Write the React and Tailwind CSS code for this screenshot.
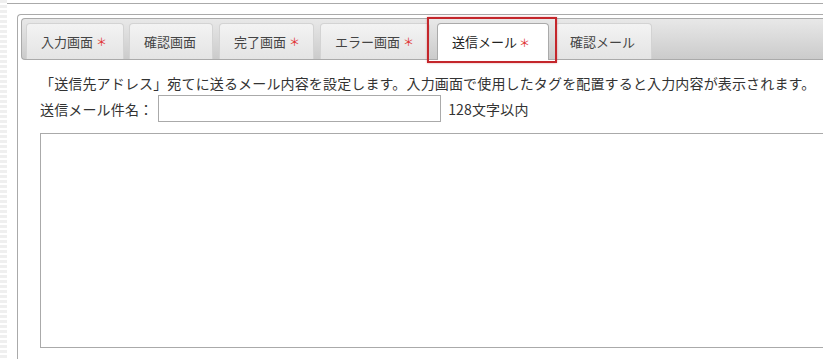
import React from 'react';

const tabs = [
  { label: '入力画面', required: true, cls: 'w-[98px]' },
  { label: '確認画面', required: false, cls: 'w-[84px] ml-[5px]' },
  { label: '完了画面', required: true, cls: 'w-[95px] ml-[6px]' },
  { label: 'エラー画面', required: true, cls: 'w-[110px] ml-[6px]' },
  { label: '送信メール', required: true, active: true, cls: 'w-[112px] ml-[7px]' },
  { label: '確認メール', required: false, cls: 'w-[97px] ml-[6px]' },
];

const Tab = ({ label, required, active, cls }) => {
  if (active) {
    return (
      <li className={`relative ${cls}`}>
        <div className="h-[37px] mb-[-1px] pl-[14px] flex items-center border border-b-0 border-[#aaaaaa] rounded-t-[4px] bg-white text-[13px] text-[#222]">
          {label}
          {required && <span className="ml-[2px] text-[11px] text-[#e03030]">＊</span>}
        </div>
        <div className="absolute left-[-10px] right-[-8px] top-[-6px] bottom-[-4px] border-2 border-[#c4262b] shadow-[0_0_2px_rgba(196,38,43,0.4)] pointer-events-none" />
      </li>
    );
  }
  return (
    <li className={`h-[36px] pl-[14px] flex items-center border border-b-0 border-[#d3d3d3] rounded-t-[4px] bg-[linear-gradient(#f3f3f3,#e4e4e4)] text-[13px] text-[#444] ${cls}`}>
      {label}
      {required && <span className="ml-[3px] text-[11px] text-[#e03030]">＊</span>}
    </li>
  );
};

export default function App() {
  return (
    <div className="flex h-[359px] w-full overflow-hidden bg-white font-['Noto_Sans_CJK_JP','Noto_Sans',sans-serif] text-[#333]">
      <div className="w-[7px] shrink-0 bg-[repeating-linear-gradient(180deg,#efefef_0px,#efefef_3px,#ffffff_3px,#ffffff_5px)]" />
      <div className="flex-1 pt-[3px] min-w-0">
        <div className="border-t border-[#aaaaaa] h-full pt-[10px] pl-[10px]">
          <div className="h-full border border-r-0 border-b-0 border-[#aaaaaa] rounded-tl-[4px] p-[3px] pr-0">
            <div className="h-[42px] border border-r-0 border-[#aaaaaa] rounded-l-[4px] bg-[linear-gradient(#e8e8e8,#cbcbcb)] pl-[4px]">
              <ul className="flex items-start pt-[4px]">
                {tabs.map((t) => (
                  <Tab key={t.label} {...t} />
                ))}
              </ul>
            </div>
            <div className="pl-[19px] pt-[13px] text-[14px] leading-[20px] tracking-[0.15px]">
              <p className="whitespace-nowrap">
                「送信先アドレス」宛てに送るメール内容を設定します。入力画面で使用したタグを配置すると入力内容が表示されます。
              </p>
              <div className="flex items-center mt-[2px] whitespace-nowrap">
                <span>送信メール件名：</span>
                <input
                  type="text"
                  className="ml-[5px] w-[283px] h-[27px] border border-[#aaaaaa] outline-none px-1"
                />
                <span className="ml-[7px]">128文字以内</span>
              </div>
              <textarea className="block mt-[11px] w-[820px] h-[215px] border border-[#aaaaaa] resize-none outline-none" />
            </div>
          </div>
        </div>
      </div>
    </div>
  );
}
